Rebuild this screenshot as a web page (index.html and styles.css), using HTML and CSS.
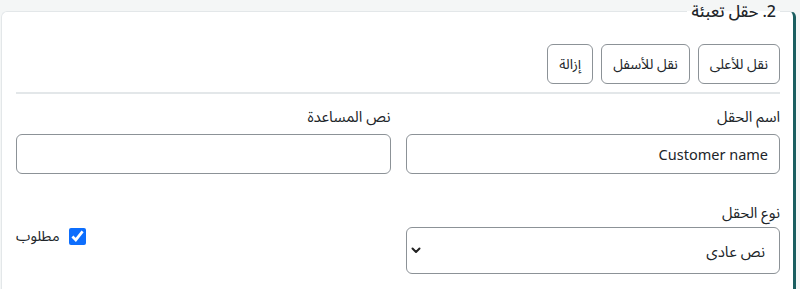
FILE: index.html
```html
<!DOCTYPE html>
<html lang="ar" dir="rtl">
<head>
<meta charset="utf-8">
<title>حقل تعبئة</title>
<link rel="stylesheet" href="styles.css">
</head>
<body>
<div class="page">

<fieldset class="field-card">
<legend class="field-title">2. حقل تعبئة</legend>

<div class="field-actions">
<button type="button" class="btn">نقل للأعلى</button>
<button type="button" class="btn">نقل للأسفل</button>
<button type="button" class="btn">إزالة</button>
</div>

<div class="field-grid">
<div class="form-group">
<label class="form-label" for="name">اسم الحقل</label>
<input class="form-control" id="name" type="text" value="Customer name">
</div>

<div class="form-group">
<label class="form-label" for="help">نص المساعدة</label>
<input class="form-control" id="help" type="text">
</div>

<div class="form-group">
<label class="form-label" for="type">نوع الحقل</label>
<div class="select-wrap">
<select class="form-select" id="type">
<option>نص عادي</option>
</select>
<svg class="select-arrow" width="10" height="7" viewBox="0 0 10 7"><path d="M1.5 1.5 5 5 8.5 1.5" fill="none" stroke="#222" stroke-width="2" stroke-linecap="round" stroke-linejoin="round"/></svg>
</div>
</div>

<div class="form-group check-group">
<label class="check">
<input type="checkbox" checked>
<span>مطلوب</span>
</label>
</div>
</div>

</fieldset>

</div>
</body>
</html>
```

FILE: styles.css
```css
*
{
padding:0;
margin:0;
box-sizing:border-box;
}

:root
{
--page-bg:#f4f6f6;
--line:#e3e7e9;
--accent:#1b5e60;
--input-border:#8c9297;
--text:#212529;
--check:#0d6efd;
}

body
{
background-color:var(--page-bg);
font-family:"Noto Sans","Noto Sans Arabic","DejaVu Sans",sans-serif;
color:var(--text);
}

.page
{
padding:0 4px 0 1px;
}

.field-card
{
background-color:#fff;
border:1px solid var(--line);
border-right:3px solid var(--accent);
border-radius:6px;
padding:22px 13px 20px 14px;
min-height:320px;
}

.field-title
{
font-size:16px;
font-weight:500;
line-height:22px;
padding:0 4px;
}

.field-actions
{
display:flex;
gap:8px;
padding-bottom:8px;
border-bottom:2px solid var(--line);
}

.btn
{
height:40px;
padding:0 11px;
font-family:inherit;
font-size:14px;
color:var(--text);
background-color:#fff;
border:1px solid var(--input-border);
border-radius:6px;
}

.field-grid
{
display:grid;
grid-template-columns:1fr 1fr;
column-gap:15px;
row-gap:27px;
padding-top:11px;
}

.form-label
{
display:block;
font-size:15px;
line-height:22px;
margin-bottom:7px;
}

.form-control
{
width:100%;
height:40px;
padding:0 11px;
font-family:inherit;
font-size:14.5px;
color:var(--text);
border:1px solid var(--input-border);
border-radius:6px;
}

.select-wrap
{
position:relative;
margin-top:-3px;
}

.form-select
{
appearance:none;
width:100%;
height:47px;
padding:0 14px;
font-family:inherit;
font-size:15px;
color:var(--text);
background-color:#fff;
border:1px solid var(--input-border);
border-radius:6px;
}

.select-arrow
{
position:absolute;
left:5px;
top:20px;
}

.check-group
{
display:flex;
justify-content:flex-end;
padding-top:26px;
}

.check
{
display:flex;
align-items:center;
gap:9px;
font-size:14.5px;
height:18px;
}

.check input
{
width:17px;
height:17px;
margin:0;
accent-color:var(--check);
}
```
